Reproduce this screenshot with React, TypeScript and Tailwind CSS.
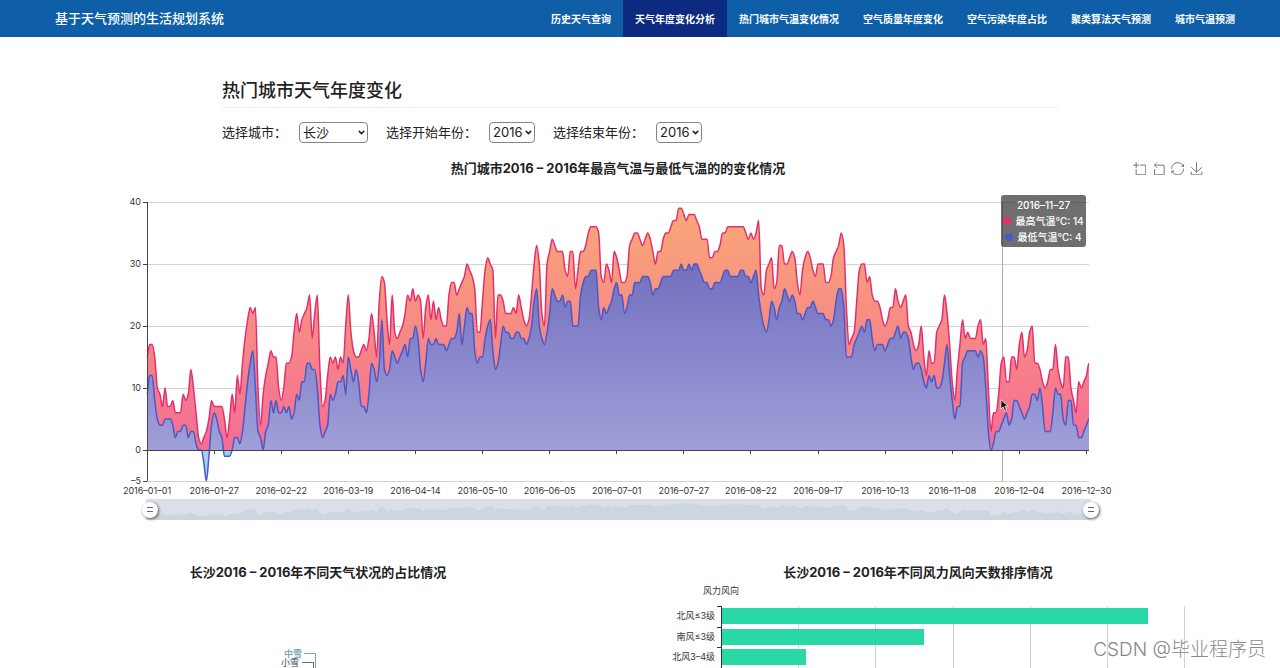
import { useState } from "react";
import { ChevronDown } from "lucide-react";

const navItems = [
  "历史天气查询",
  "天气年度变化分析",
  "热门城市气温变化情况",
  "空气质量年度变化",
  "空气污染年度占比",
  "聚类算法天气预测",
  "城市气温预测",
];

// daily temperatures, 2016-01-01 to 2016-12-31
const highs = [
  15, 17, 17, 15, 10, 9, 7, 10, 7, 7, 8, 6, 6, 6, 9, 8, 9, 13, 10, 6, 2, 1, 2, 3, 5, 8, 7, 7, 7, 7,
  5, 2, 5, 9, 6, 12, 9, 14, 18, 21, 23, 22, 23, 10, 4, 9, 12, 14, 16, 15, 15, 10, 8, 10, 14, 14, 15, 19, 22, 19,
  21, 22, 23, 25, 18, 22, 25, 13, 7, 8, 12, 15, 14, 15, 13, 15, 14, 20, 25, 19, 16, 15, 15, 16, 17, 16, 18, 22, 19, 15,
  24, 28, 27, 21, 17, 25, 19, 18, 19, 20, 22, 25, 24, 26, 24, 25, 24, 18, 23, 25, 21, 24, 21, 23, 21, 20, 20, 25, 27, 27,
  25, 26, 27, 28, 30, 29, 28, 26, 19, 19, 24, 29, 31, 30, 29, 18, 25, 25, 24, 22, 22, 22, 23, 22, 25, 23, 21, 20, 21, 25,
  30, 33, 30, 22, 20, 30, 32, 34, 33, 32, 32, 32, 29, 28, 32, 32, 26, 29, 32, 32, 33, 35, 36, 36, 36, 35, 28, 27, 30, 29,
  27, 32, 31, 29, 27, 27, 28, 33, 34, 35, 35, 34, 33, 34, 35, 34, 32, 30, 32, 32, 34, 35, 35, 36, 37, 37, 39, 39, 38, 37,
  38, 38, 38, 37, 36, 34, 34, 34, 31, 31, 32, 32, 33, 35, 35, 36, 36, 36, 36, 36, 36, 36, 35, 34, 35, 34, 35, 37, 26, 25,
  29, 30, 31, 26, 27, 33, 33, 30, 30, 31, 32, 31, 27, 25, 29, 31, 32, 31, 29, 28, 30, 30, 30, 27, 27, 28, 31, 32, 33, 35,
  33, 23, 17, 18, 19, 24, 29, 30, 30, 27, 28, 25, 24, 24, 23, 21, 20, 21, 23, 23, 26, 24, 23, 24, 25, 20, 19, 17, 16, 17,
  20, 15, 12, 16, 14, 14, 19, 20, 21, 25, 22, 17, 11, 8, 13, 17, 21, 18, 19, 18, 18, 18, 20, 21, 17, 18, 10, 3, 6, 6,
  9, 14, 15, 11, 11, 15, 15, 13, 17, 19, 15, 16, 19, 20, 14, 14, 13, 11, 10, 11, 13, 13, 17, 13, 11, 10, 15, 15, 10, 8,
  6, 11, 10, 11, 12, 14,
];

const lows = [
  9, 12, 12, 8, 5, 4, 4, 5, 5, 5, 4, 2, 3, 3, 4, 4, 2, 3, 3, 1, 0, 0, -2, -5, -1, 4, 6, 5, 3, 2,
  -1, -1, -1, 0, 2, 2, 1, 3, 7, 11, 14, 16, 10, 3, 2, 0, 3, 4, 8, 6, 8, 6, 6, 7, 6, 7, 5, 6, 9, 8,
  11, 11, 14, 14, 13, 13, 10, 4, 2, 3, 4, 9, 8, 9, 11, 11, 12, 9, 15, 13, 11, 13, 11, 7, 7, 6, 9, 14, 13, 11,
  14, 21, 13, 12, 13, 16, 15, 14, 15, 16, 17, 15, 18, 18, 20, 18, 13, 11, 14, 18, 17, 17, 18, 17, 17, 17, 16, 17, 18, 18,
  19, 22, 17, 20, 23, 22, 22, 16, 14, 15, 15, 18, 20, 21, 16, 13, 14, 17, 20, 19, 19, 18, 18, 19, 19, 18, 18, 17, 18, 20,
  24, 26, 20, 18, 17, 19, 22, 26, 25, 24, 24, 25, 23, 24, 24, 20, 20, 20, 25, 27, 28, 28, 29, 29, 29, 23, 21, 23, 22, 23,
  24, 26, 27, 25, 25, 22, 23, 25, 25, 27, 27, 27, 28, 28, 28, 27, 25, 26, 26, 27, 28, 28, 28, 28, 29, 29, 29, 30, 29, 29,
  30, 29, 30, 30, 29, 28, 27, 27, 26, 26, 27, 27, 27, 28, 29, 29, 28, 28, 28, 28, 29, 29, 28, 28, 27, 28, 29, 25, 22, 20,
  19, 21, 24, 23, 21, 23, 24, 26, 25, 24, 25, 24, 22, 22, 21, 22, 23, 23, 24, 23, 22, 22, 22, 21, 21, 20, 21, 24, 26, 26,
  23, 15, 15, 15, 17, 18, 19, 20, 19, 21, 21, 18, 16, 17, 17, 17, 16, 17, 18, 18, 19, 20, 18, 19, 19, 18, 15, 13, 14, 14,
  13, 11, 10, 12, 11, 12, 10, 10, 11, 14, 17, 12, 8, 5, 7, 7, 14, 15, 16, 16, 16, 16, 15, 16, 15, 10, 3, 0, 1, 3,
  3, 4, 5, 6, 4, 5, 8, 8, 7, 6, 5, 6, 7, 9, 9, 8, 10, 7, 3, 3, 3, 6, 10, 9, 9, 5, 4, 8, 8, 4,
  4, 2, 2, 3, 4, 5,
];

const dateLabels = [
  "2016–01–01",
  "2016–01–27",
  "2016–02–22",
  "2016–03–19",
  "2016–04–14",
  "2016–05–10",
  "2016–06–05",
  "2016–07–01",
  "2016–07–27",
  "2016–08–22",
  "2016–09–17",
  "2016–10–13",
  "2016–11–08",
  "2016–12–04",
  "2016–12–30",
];

const windRows = [
  { name: "北风≤3级", width: 427 },
  { name: "南风≤3级", width: 203 },
  { name: "北风3–4级", width: 85 },
];

const LEFT = 147;
const RIGHT = 1089;
const STEP = (RIGHT - LEFT) / 365;

const px = (day: number) => LEFT + day * STEP;
const py = (value: number) => 260 - value * 6.2;

// monotone cubic curve through the daily values
function smoothLine(values: number[], toY: (v: number) => number) {
  const slope = values.map((v, i) => {
    if (i === 0 || i === values.length - 1) return 0;
    const a = v - values[i - 1];
    const b = values[i + 1] - v;
    return a * b <= 0 ? 0 : (2 * a * b) / (a + b);
  });
  let d = `M${px(0).toFixed(2)},${toY(values[0]).toFixed(2)}`;
  for (let i = 1; i < values.length; i++) {
    const c1 = toY(values[i - 1] + slope[i - 1] / 3);
    const c2 = toY(values[i] - slope[i] / 3);
    d += `C${(px(i - 1) + STEP / 3).toFixed(2)},${c1.toFixed(2)} ${(px(i) - STEP / 3).toFixed(2)},${c2.toFixed(2)} ${px(i).toFixed(2)},${toY(values[i]).toFixed(2)}`;
  }
  return d;
}

const highLine = smoothLine(highs, py);
const lowLine = smoothLine(lows, py);
const closeAtZero = `L${RIGHT},${py(0)}L${LEFT},${py(0)}Z`;
const shadowArea = smoothLine(highs, (v) => 18 - v * 0.35) + `L${RIGHT},21L${LEFT},21Z`;

const tools = [
  { label: "区域缩放", d: "M0,13.5h26.9 M13.5,26.9V0 M32.1,13.5H58V58H13.5 V32.1" },
  { label: "区域缩放还原", d: "M22,1.4L9.9,13.5l12.3,12.3 M10.3,13.5H54.9v44.6 H10.3v-26" },
  {
    label: "还原",
    d: "M47,18.9h9.8V8.7 M56.3,20.1 C52.1,9,40.5,0.6,26.8,2.1C12.6,3.7,1.6,16.2,2.1,30.6 M13,41.1H3.1v10.2 M3.7,39.9c4.2,11.1,15.8,19.5,29.5,18 c14.2-1.6,25.2-14.1,24.7-28.5",
  },
  { label: "保存为图片", d: "M4.7,22.9L29.3,45.5L54.7,23.4M4.6,43.6L4.6,58L53.8,58L53.8,43.6M29.2,45.1L29.2,0" },
];

const Header = () => (
  <header className="flex h-[37px] items-center justify-between bg-[#0e5fa8] pl-[55px] pr-[33px] text-white">
    <a href="#" className="text-[13px] font-medium">
      基于天气预测的生活规划系统
    </a>
    <nav className="flex h-full">
      {navItems.map((item, i) => (
        <a
          key={item}
          href="#"
          className={
            i === 1
              ? "flex items-center bg-[#0b2a80] px-3 pt-px text-[10px] font-bold"
              : "flex items-center px-3 pt-px text-[10px] font-bold"
          }
        >
          {item}
        </a>
      ))}
    </nav>
  </header>
);

interface FilterSelectProps {
  id: string;
  label: string;
  options: string[];
  width: string;
}

const FilterSelect = ({ id, label, options, width }: FilterSelectProps) => {
  const [value, setValue] = useState(options[0]);

  return (
    <div className="flex items-center gap-3">
      <label htmlFor={id}>{label}</label>
      <div className={`relative h-[21px] ${width}`}>
        <select
          id={id}
          value={value}
          onChange={(e) => setValue(e.target.value)}
          className="block h-full w-full appearance-none rounded-sm border border-[#858585] bg-white pl-[3px]"
        >
          {options.map((option) => (
            <option key={option}>{option}</option>
          ))}
        </select>
        <ChevronDown
          className="pointer-events-none absolute top-[6px] right-[2px] size-[9px]"
          strokeWidth={4}
        />
      </div>
    </div>
  );
};

const Filters = () => (
  <form className="mt-[14px] flex items-center gap-[18px] text-[13px]">
    <FilterSelect id="city" label="选择城市：" options={["长沙", "北京", "上海"]} width="w-[69px]" />
    <FilterSelect id="start" label="选择开始年份：" options={["2016", "2017"]} width="w-[46px]" />
    <FilterSelect id="end" label="选择结束年份：" options={["2016", "2017"]} width="w-[46px]" />
  </form>
);

const TemperatureChart = () => (
  <div className="relative">
    <svg viewBox="0 0 1280 309" className="block w-full" role="img" aria-label="最高气温与最低气温">
      <defs>
        <linearGradient id="high" gradientUnits="userSpaceOnUse" x1="0" y1="18" x2="0" y2="260">
          <stop offset="0" stopColor="#f8a46f" />
          <stop offset="1" stopColor="#f5648f" />
        </linearGradient>
        <linearGradient id="low" gradientUnits="userSpaceOnUse" x1="0" y1="74" x2="0" y2="260">
          <stop offset="0" stopColor="#7370bf" />
          <stop offset="1" stopColor="#9f9fd9" />
          <stop offset="1" stopColor="#a4d0f5" />
        </linearGradient>
      </defs>
      <g shapeRendering="crispEdges">
        {[40, 30, 20, 10, -5].map((v) => (
          <line key={v} x1={LEFT} x2={RIGHT} y1={py(v)} y2={py(v)} stroke="#d2d2d2" />
        ))}
        <line x1="1002" x2="1002" y1={py(40)} y2={py(-5)} stroke="#aaa" />
      </g>
      <path d={highLine + closeAtZero} fill="url(#high)" opacity="0.95" />
      <path d={lowLine + closeAtZero} fill="url(#low)" />
      <path d={highLine} fill="none" stroke="#e2306f" strokeWidth="1.5" />
      <path d={lowLine} fill="none" stroke="#4a58c8" strokeWidth="1.5" />
      <g shapeRendering="crispEdges" stroke="#444">
        <line x1={LEFT} x2={LEFT} y1={py(40)} y2={py(-5)} />
        <line x1={LEFT} x2={RIGHT} y1={py(0)} y2={py(0)} />
        {[40, 30, 20, 10, 0, -5].map((v) => (
          <line key={v} x1={LEFT - 4} x2={LEFT} y1={py(v)} y2={py(v)} />
        ))}
        {dateLabels.map((label, i) => (
          <line key={label} x1={px(i * 26)} x2={px(i * 26)} y1={py(0)} y2={py(0) + 4} />
        ))}
      </g>
      <g fill="#333" fontSize="9">
        {[40, 30, 20, 10, 0, -5].map((v) => (
          <text key={v} x="141" y={py(v) + 3} textAnchor="end">
            {v < 0 ? `–${-v}` : v}
          </text>
        ))}
        {dateLabels.map((label, i) => (
          <text key={label} x={px(i * 26)} y="304" textAnchor="middle">
            {label}
          </text>
        ))}
      </g>
    </svg>

    <div className="absolute left-[1001px] top-[5px] w-[85px] rounded-[3px] bg-[#323232]/70 py-[2px] text-center text-[10px] leading-4 font-medium text-white">
      <p>2016–11–27</p>
      <p className="flex items-center justify-center gap-1 whitespace-nowrap">
        <span className="size-2 rounded-full bg-[#e2306f]" />
        最高气温℃: 14
      </p>
      <p className="flex items-center justify-center gap-1 whitespace-nowrap">
        <span className="size-2 rounded-full bg-[#4a58c8]" />
        最低气温℃: 4
      </p>
    </div>

    <svg viewBox="0 0 12 18" className="absolute left-[1000px] top-[209px] h-[13px] w-[9px]">
      <path d="M1 1v13l3-3 2.4 5.5 2.4-1L6.500 10H11z" fill="#111" stroke="#fff" />
    </svg>
  </div>
);

const thumb =
  "pointer-events-none absolute inset-0 w-full appearance-none bg-transparent [&::-webkit-slider-thumb]:pointer-events-auto [&::-webkit-slider-thumb]:size-4 [&::-webkit-slider-thumb]:appearance-none [&::-webkit-slider-thumb]:rounded-full [&::-webkit-slider-thumb]:bg-white [&::-webkit-slider-thumb]:bg-[linear-gradient(#666_1px,transparent_1px,transparent_4px,#666_4px)] [&::-webkit-slider-thumb]:bg-[length:6px_5px] [&::-webkit-slider-thumb]:bg-center [&::-webkit-slider-thumb]:bg-no-repeat [&::-webkit-slider-thumb]:shadow-[1px_1px_3px_#555]";

const RangeSlider = () => {
  const [from, setFrom] = useState(0);
  const [to, setTo] = useState(100);

  return (
    <div className="relative mr-[181px] ml-[142px] h-[21px]">
      <div className="mr-2 ml-1">
        <svg viewBox="147 0 942 21" preserveAspectRatio="none" className="block h-[21px] w-full bg-[#dadfe9]">
          <path d={shadowArea} fill="#cdd5e0" />
        </svg>
      </div>
      <input
        type="range"
        aria-label="开始日期"
        value={from}
        onChange={(e) => setFrom(Number(e.target.value))}
        className={thumb}
      />
      <input
        type="range"
        aria-label="结束日期"
        value={to}
        onChange={(e) => setTo(Number(e.target.value))}
        className={thumb}
      />
    </div>
  );
};

const WeatherPie = () => (
  <section>
    <h3 className="text-center text-[13px] leading-5 font-bold">长沙2016 – 2016年不同天气状况的占比情况</h3>
    <svg viewBox="0 0 600 87" className="block w-full" fontSize="9">
      <g fill="none">
        <path d="M286 71.500H297.500V87" stroke="#7fa3aa" />
        <path d="M284 80.500H295.500V87" stroke="#5f6d78" />
      </g>
      <text x="284" y="75" textAnchor="end" fill="#61a0a8" fontWeight="500">
        中雪
      </text>
      <text x="281" y="84" textAnchor="end" fill="#2f4554">
        小雪
      </text>
    </svg>
  </section>
);

const WindChart = () => (
  <section>
    <h3 className="text-center text-[13px] leading-5 font-bold">长沙2016 – 2016年不同风力风向天数排序情况</h3>
    <svg viewBox="0 0 600 87" className="block w-full" fontSize="9">
      <g shapeRendering="crispEdges">
        {[180, 257, 335, 412, 489, 566].map((x) => (
          <line key={x} x1={x} x2={x} y1="24" y2="87" stroke="#d2d2d2" />
        ))}
        {windRows.map((row, i) => (
          <rect key={row.name} x="103" y={26 + i * 20.5} width={row.width} height="16" fill="#29d8a4" />
        ))}
        <line x1="103" x2="103" y1="24" y2="87" stroke="#333" />
        {[24, 45, 65, 86].map((y) => (
          <line key={y} x1="99" x2="103" y1={y} y2={y} stroke="#333" />
        ))}
      </g>
      <g fill="#333">
        <text x="103" y="12" textAnchor="middle">
          风力风向
        </text>
        {windRows.map((row, i) => (
          <text key={row.name} x="97" y={37 + i * 20.5} textAnchor="end">
            {row.name}
          </text>
        ))}
      </g>
    </svg>
  </section>
);

export default function App() {
  return (
    <div className="relative min-h-screen overflow-hidden bg-white font-['Inter','Noto_Sans_CJK_SC',sans-serif] text-[#222]">
      <Header />
      <main>
        <div className="mx-auto mt-[41px] max-w-[836px]">
          <h1 className="border-b border-[#eee] pb-[3px] text-lg leading-[26px] font-medium">热门城市天气年度变化</h1>
          <Filters />
        </div>

        <section className="mt-[15px]">
          <div className="grid grid-cols-[1fr_auto_1fr] items-center pr-[44px]">
            <h2 className="col-start-2 text-[13px] leading-5 font-bold">
              热门城市2016 – 2016年最高气温与最低气温的的变化情况
            </h2>
            <div className="flex justify-end gap-[6px] pr-[33px]">
              {tools.map((tool) => (
                <button key={tool.label} type="button" aria-label={tool.label}>
                  <svg viewBox="-1 -1 60 60" className="size-[13px]" fill="none" stroke="#666" strokeWidth="4">
                    <path d={tool.d} />
                  </svg>
                </button>
              ))}
            </div>
          </div>
          <div className="mt-3">
            <TemperatureChart />
          </div>
          <RangeSlider />
        </section>

        <div className="mt-[42px] grid grid-cols-2 pr-[62px] pl-[18px]">
          <WeatherPie />
          <WindChart />
        </div>
      </main>
      <p className="absolute right-[14px] bottom-1 text-[19px] leading-[30px] font-light text-[#888]">
        CSDN @毕业程序员
      </p>
    </div>
  );
}
